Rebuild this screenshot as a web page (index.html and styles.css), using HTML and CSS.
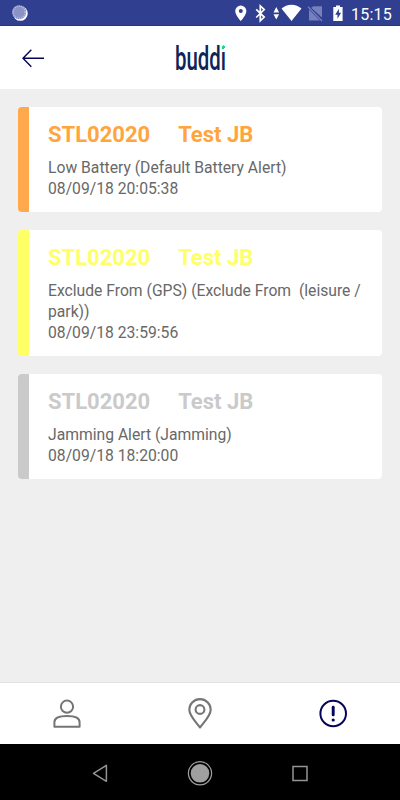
FILE: index.html
```html
<!DOCTYPE html>
<html lang="en">
<head>
<meta charset="utf-8">
<meta name="viewport" content="width=device-width, initial-scale=1">
<title>buddi alerts</title>
<link rel="stylesheet" href="styles.css">
</head>
<body>
<div class="status">
  <svg class="sync" width="16" height="16" viewBox="0 0 16 16"><circle cx="8.3" cy="8.4" r="7.4" fill="#fff"/><circle cx="7.2" cy="7.2" r="7" fill="#8b93c6"/><circle cx="7.2" cy="7.2" r="6" fill="none" stroke="#b7bcdd" stroke-width="1.6" stroke-dasharray="1 1.1"/></svg>
  <svg class="tray" width="123" height="26" viewBox="0 0 123 26">
    <path fill="#fff" fill-rule="evenodd" d="M5.800 5.500A5.600 5.600 0 0 0 .2 11.100c0 4.100 5.600 10.100 5.600 10.100s5.600-6 5.600-10.100A5.600 5.600 0 0 0 5.800 5.500zm0 3.600a2 2 0 1 1 0 4 2 2 0 0 1 0-4z"/>
    <path fill="none" stroke="#fff" stroke-width="1.700" d="M21.200 9.300l8 7.800-3.900 3.700V6l3.900 3.600-8 7.900"/>
    <path fill="#fff" d="M38.500 12.400L41.300 7l2.800 5.400zM38.500 14.200h5.600l-2.800 5.400zM46.500 8.600a15 15 0 0 1 20 0l-10 12.300z"/>
    <path fill="#7580bd" d="M78.500 6.200H87v11.300L76.200 7.800zM74 9.500l10.800 11H74z"/>
    <path stroke="#7580bd" stroke-width="1.300" d="M73 6.800l14 14.200"/>
    <path fill="#fff" d="M101 5.500h4V7h2.600v14H98.300V7h2.700z"/>
    <path fill="#303f8f" d="M103.900 8.800l-3.700 5.900h2.300v4.100l3.600-6h-2.200z"/>
  </svg>
  <span class="clock">15:15</span>
</div>
<header class="header">
  <svg class="back" width="24" height="20" viewBox="0 0 24 20"><path fill="none" stroke="#04045a" stroke-width="1.400" d="M23 10.300H2.300M10.300 1.700L2 10.300l8.300 8.400"/></svg>
  <span class="wordmark">buddi</span>
</header>
<main class="list">
  <article class="card orange">
    <h2><span>STL02020</span><span>Test JB</span></h2>
    <p>Low Battery (Default Battery Alert)</p>
    <p>08/09/18 20:05:38</p>
  </article>
  <article class="card yellow">
    <h2><span>STL02020</span><span>Test JB</span></h2>
    <p>Exclude From (GPS) (Exclude From&nbsp; (leisure / park))</p>
    <p>08/09/18 23:59:56</p>
  </article>
  <article class="card grey">
    <h2><span>STL02020</span><span>Test JB</span></h2>
    <p>Jamming Alert (Jamming)</p>
    <p>08/09/18 18:20:00</p>
  </article>
</main>
<nav class="tabs">
  <svg width="32" height="32" viewBox="0 0 32 32" fill="none" stroke="#757575" stroke-width="2"><circle cx="16" cy="8.700" r="6.100"/><path stroke-linejoin="round" d="M3.400 28.700v-4.500c0-4 4.500-6.300 12.600-6.300s12.600 2.300 12.600 6.300v4.500z"/></svg>
  <svg width="32" height="32" viewBox="0 0 32 32" fill="none" stroke="#757575" stroke-width="2.100"><path stroke-linejoin="round" d="M16 29.500C12 24.200 5.300 17.700 5.300 11.800a10.700 10.700 0 0 1 21.400 0C26.700 17.700 20 24.200 16 29.500z"/><circle cx="16" cy="11.500" r="4.400"/></svg>
  <svg width="32" height="32" viewBox="0 0 32 32" fill="none" stroke="#04045a" stroke-width="2"><circle cx="16.200" cy="15.500" r="12.800"/><path stroke-width="2.900" stroke-linecap="round" d="M16.200 9.300v7.600"/><circle cx="16.200" cy="22" r="1.600" fill="#04045a" stroke="none"/></svg>
</nav>
<footer class="system">
  <svg width="26" height="26" viewBox="0 0 26 26"><path fill="none" stroke="#949494" stroke-width="1.500" stroke-linejoin="round" d="M19.400 5.300v16L6.500 13.300z"/></svg>
  <svg width="26" height="26" viewBox="0 0 26 26"><circle cx="13" cy="13.300" r="11.600" fill="none" stroke="#a0a0a0" stroke-width="1.200"/><circle cx="13" cy="13.300" r="9.300" fill="#a0a0a0"/></svg>
  <svg width="26" height="26" viewBox="0 0 26 26"><rect x="6" y="6.500" width="14" height="14" fill="none" stroke="#949494" stroke-width="1.500"/></svg>
</footer>
</body>
</html>
```
FILE: styles.css
```css
* { box-sizing: border-box; margin: 0; padding: 0; }
svg { display: block; flex: none; }
body {
  width: 400px;
  height: 800px;
  display: flex;
  flex-direction: column;
  overflow: hidden;
  background: #efefef;
  font-family: Roboto, "Liberation Sans", sans-serif;
}
.status {
  height: 26px;
  flex: none;
  display: flex;
  align-items: center;
  padding: 0 9px 0 12px;
  background: #303f8f;
  border-bottom: 1px solid #283584;
}
.tray { margin-left: auto; margin-top: 1px; }
.clock {
  width: 40px;
  margin-left: -7px;
  padding-top: 4px;
  color: #fff;
  font-size: 16px;
  font-weight: 400;
  letter-spacing: 0.2px;
  line-height: 20px;
  white-space: nowrap;
}
.header {
  height: 63px;
  flex: none;
  display: grid;
  grid-template-columns: 1fr auto 1fr;
  align-items: center;
  padding: 0 21px;
  background: #fff;
}
.back { margin-top: 1px; }
.wordmark {
  position: relative;
  color: #0d2458;
  font-size: 34px;
  font-weight: 500;
  line-height: 42px;
  transform: scaleX(0.6);
}
/* green dot over the last letter */
.wordmark::after {
  content: "";
  position: absolute;
  top: 7px;
  right: 1px;
  width: 7px;
  height: 7px;
  background: radial-gradient(ellipse 3px 1.8px at 50% 45%, #14dc82 90%, #fff 100%);
}
.list {
  flex: 1;
  display: flex;
  flex-direction: column;
  gap: 18px;
  padding: 18px;
}
.card {
  padding: 15px 18px 13px 19px;
  border-left: 11px solid;
  border-radius: 4px;
  background: #fff;
}
.card h2 {
  display: flex;
  gap: 28px;
  margin-bottom: 9px;
  font-size: 22px;
  font-weight: 700;
  line-height: 26px;
}
.card p {
  color: #686868;
  font-size: 15.7px;
  line-height: 21px;
}
.orange { border-color: #ffa84c; }
.orange h2 { color: #ffa53c; }
.yellow { border-color: #ffff66; }
.yellow h2 { color: #ffff66; }
.grey { border-color: #cacaca; }
.grey h2 { color: #cacaca; }
.tabs {
  height: 62px;
  flex: none;
  display: grid;
  grid-template-columns: repeat(3, 1fr);
  place-items: center;
  background: #fff;
  border-top: 1px solid #e2e2e2;
}
.system {
  height: 56px;
  flex: none;
  display: flex;
  justify-content: center;
  gap: 74px;
  padding-top: 16px;
  background: #000;
}
```
